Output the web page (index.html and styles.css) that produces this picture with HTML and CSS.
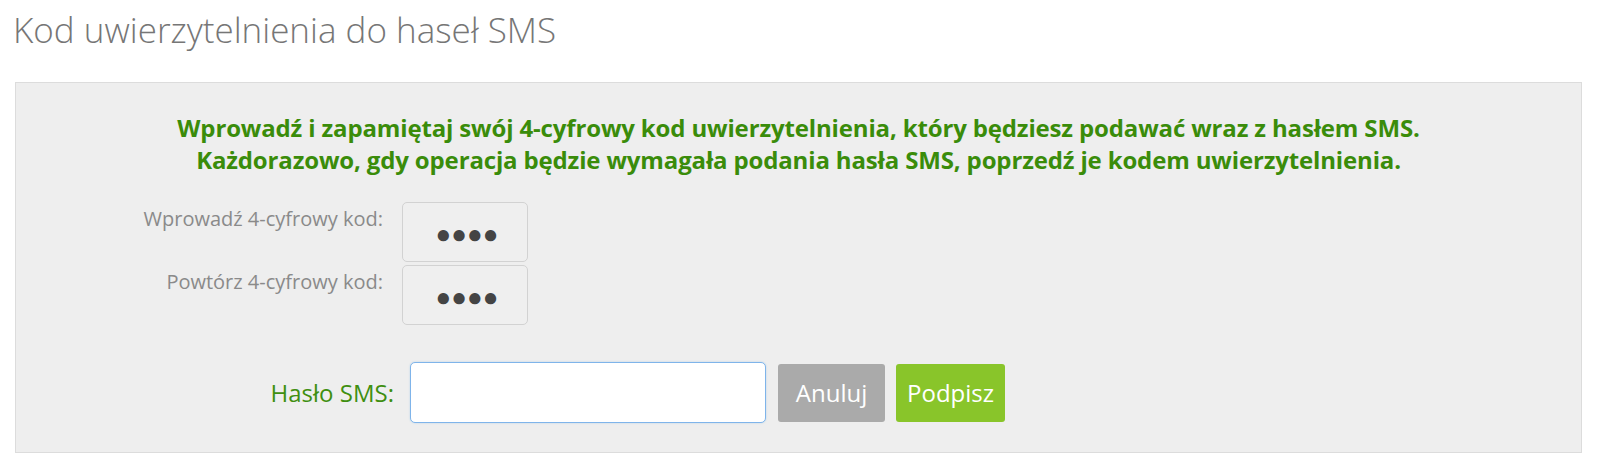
FILE: index.html
```html
<!DOCTYPE html>
<html lang="pl">
<head>
<meta charset="utf-8">
<title>Kod uwierzytelnienia do haseł SMS</title>
<link rel="stylesheet" href="styles.css">
</head>
<body>
<h1 class="page-title">Kod uwierzytelnienia do haseł SMS</h1>
<section class="panel">
  <p class="notice">Wprowadź i zapamiętaj swój 4-cyfrowy kod uwierzytelnienia, który będziesz podawać wraz z hasłem SMS.<br>Każdorazowo, gdy operacja będzie wymagała podania hasła SMS, poprzedź je kodem uwierzytelnienia.</p>
  <div class="code-row">
    <label class="code-label">Wprowadź 4-cyfrowy kod:</label>
    <div class="code-box">●●●●</div>
  </div>
  <div class="code-row">
    <label class="code-label">Powtórz 4-cyfrowy kod:</label>
    <div class="code-box">●●●●</div>
  </div>
  <div class="sms-row">
    <label class="sms-label" for="sms">Hasło SMS:</label>
    <input class="sms-input" id="sms" type="text">
    <button class="btn btn-cancel" type="button">Anuluj</button>
    <button class="btn btn-sign" type="button">Podpisz</button>
  </div>
</section>
</body>
</html>
```
FILE: styles.css
```css
html, body {
  margin: 0;
  padding: 0;
  background: #fff;
}
body {
  font-family: "Open Sans", "Noto Sans", sans-serif;
  width: 1600px;
  height: 466px;
  overflow: hidden;
}
.page-title {
  margin: 0;
  padding: 10px 0 0 13px;
  height: 70px;
  box-sizing: border-box;
  font-size: 35px;
  font-weight: 300;
  line-height: 40px;
  color: #767676;
  white-space: nowrap;
}
.panel {
  margin: 12px 18px 0 15px;
  height: 371px;
  box-sizing: border-box;
  background: #eeeeee;
  border: 1px solid #dcdcdc;
  padding-top: 29px;
}
.notice {
  margin: 0;
  text-align: center;
  font-size: 24px;
  font-weight: 700;
  line-height: 32px;
  color: #3a8c0a;
  letter-spacing: -0.15px;
  white-space: nowrap;
}
.code-row {
  display: flex;
  gap: 19px;
  margin-top: 3px;
}
.notice + .code-row {
  margin-top: 26px;
}
.code-label {
  width: 367px;
  text-align: right;
  font-size: 20px;
  line-height: 24px;
  padding-top: 5px;
  color: #8a8a8a;
  white-space: nowrap;
}
.code-box {
  width: 126px;
  height: 60px;
  box-sizing: border-box;
  border: 1px solid #d2d2d2;
  border-radius: 5px;
  background: #efefef;
  display: flex;
  align-items: center;
  justify-content: center;
  padding: 2px 0 0 4px;
  font-size: 26px;
  letter-spacing: 0;
  color: #444;
}
.sms-row {
  display: flex;
  align-items: center;
  margin-top: 37px;
}
.sms-label {
  width: 378px;
  text-align: right;
  font-size: 24px;
  color: #3f8f10;
  margin-right: 16px;
  white-space: nowrap;
}
.sms-input {
  width: 356px;
  height: 61px;
  box-sizing: border-box;
  border: 1px solid #7fb4ea;
  border-radius: 5px;
  background: #fff;
  margin: 0 12px 0 0;
  padding: 0 12px;
  font: inherit;
  box-shadow: 0 0 2px rgba(102, 175, 233, 0.4);
}
.btn {
  height: 58px;
  border: none;
  border-radius: 3px;
  color: #fff;
  font-family: inherit;
  font-size: 24px;
  padding: 0;
  cursor: pointer;
}
.btn-cancel {
  width: 107px;
  background: #aaaaaa;
  margin-right: 11px;
}
.btn-sign {
  width: 109px;
  background: #89c52a;
}
```
